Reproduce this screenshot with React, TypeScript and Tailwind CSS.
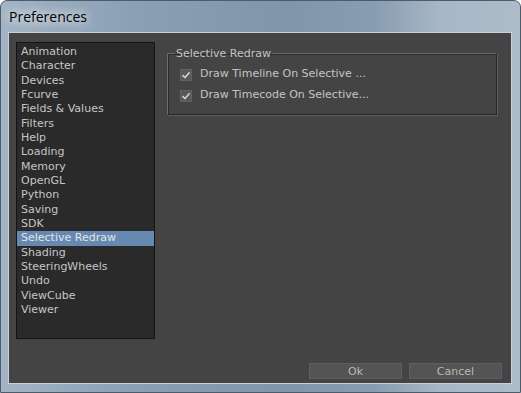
const items = [
  "Animation",
  "Character",
  "Devices",
  "Fcurve",
  "Fields & Values",
  "Filters",
  "Help",
  "Loading",
  "Memory",
  "OpenGL",
  "Python",
  "Saving",
  "SDK",
  "Selective Redraw",
  "Shading",
  "SteeringWheels",
  "Undo",
  "ViewCube",
  "Viewer",
];

const selected = "Selective Redraw";

function Check({ label }: { label: string }) {
  return (
    <div className="flex items-center h-[21px]">
      <div className="ml-[12px] w-[12px] h-[12px] bg-[#585858] border border-[#626262] flex items-center justify-center">
        <svg width="10" height="10" viewBox="0 0 10 10">
          <path d="M1.5 5.2 L4 7.6 L8.6 2.2" fill="none" stroke="#cfcfcf" strokeWidth="1.6" />
        </svg>
      </div>
      <span className="ml-[8px] text-[11px] text-[#c4c4c4] whitespace-nowrap">{label}</span>
    </div>
  );
}

export default function App() {
  return (
    <div
      className="w-[521px] h-[393px] flex flex-col rounded-t-[7px] border border-[#4d5c6b] bg-[linear-gradient(to_right,#a3b4c5_0%,#8aa0b5_25%,#7f95aa_55%,#889db1_72%,#a8b7c5_85%,#aebcca_100%)] overflow-hidden"
      style={{ fontFamily: '"DejaVu Sans", Verdana, sans-serif' }}
    >
      {/* title bar */}
      <div className="h-[31px] flex items-center pl-[8px] shrink-0">
        <span
          className="text-[14px] text-black [text-shadow:0_0_8px_rgba(255,255,255,0.95),0_0_14px_rgba(255,255,255,0.8)]"
          style={{ fontFamily: '"Open Sans", "Noto Sans", sans-serif' }}
        >
          Preferences
        </span>
      </div>

      {/* client area */}
      <div className="flex-1 ml-[7px] mr-[8px] mb-[8px] border border-[#c5d1dc] bg-[#444444] flex flex-col">
        <div className="flex pt-[9px] pl-[7px]">
          {/* category list */}
          <div className="w-[139px] h-[297px] bg-[#2a2a2a] border border-[#141414] pt-[2px] shrink-0">
            {items.map((it) => (
              <div
                key={it}
                className={
                  "h-[14.33px] flex items-center pl-[4px] text-[11px] whitespace-nowrap " +
                  (it === selected ? "bg-[#6689b2] text-[#e4e4e4]" : "text-[#c6c6c6]")
                }
              >
                {it}
              </div>
            ))}
          </div>

          {/* settings */}
          <div className="flex-1 pl-[12px] pr-[14px]">
            <fieldset className="mt-[5px] h-[68px] border border-t-[#6c6c6c] border-l-[#6c6c6c] border-r-[#262626] border-b-[#262626] shadow-[inset_1px_1px_0_#2c2c2c,1px_1px_0_#5e5e5e]">
              <legend className="ml-[7px] px-[1px] text-[11px] text-[#c4c4c4] leading-[13px]">
                Selective Redraw
              </legend>
              <div className="pt-[4px]">
                <Check label="Draw Timeline On Selective ..." />
                <Check label="Draw Timecode On Selective..." />
              </div>
            </fieldset>
          </div>
        </div>

        <div className="flex-1" />

        <div className="flex justify-end gap-[7px] pr-[9px] pb-[4px]">
          <button className="w-[93px] h-[16px] bg-[#545454] border border-[#5e5e5e] text-[11px] text-[#b9b9b9] leading-none">
            Ok
          </button>
          <button className="w-[93px] h-[16px] bg-[#545454] border border-[#5e5e5e] text-[11px] text-[#b9b9b9] leading-none">
            Cancel
          </button>
        </div>
      </div>
    </div>
  );
}
